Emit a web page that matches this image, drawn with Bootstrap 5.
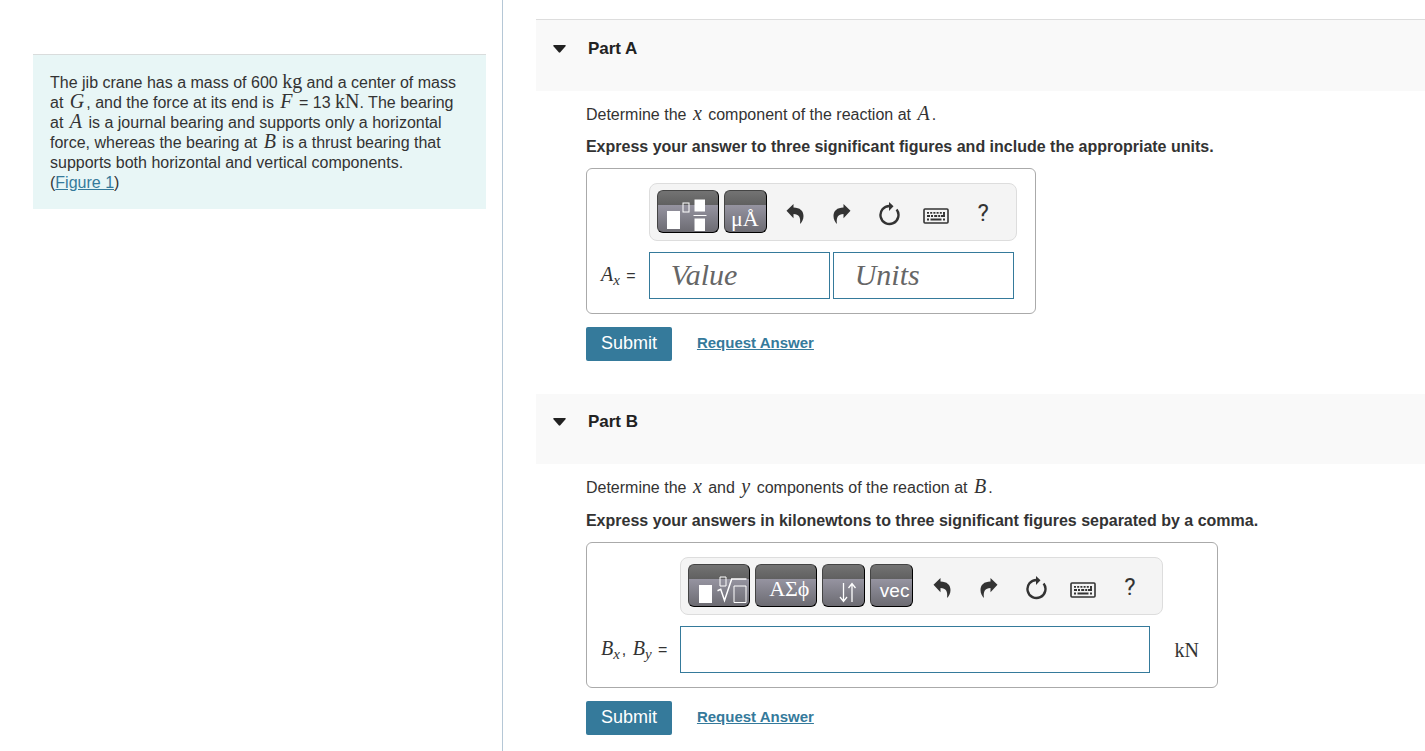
<!DOCTYPE html>
<html lang="en">
<head>
<meta charset="utf-8">
<meta name="viewport" content="width=device-width, initial-scale=1">
<title>Jib crane reactions</title>
<link href="https://cdn.jsdelivr.net/npm/bootstrap@5.3.0/dist/css/bootstrap.min.css" rel="stylesheet">
<style>
  :root { --teal: #357a9b; --ink: #333; }
  body { font-family: "Liberation Sans", Arial, sans-serif; font-size: 16px; line-height: 20px; color: var(--ink); }
  a { color: var(--teal); }
  .page-grid { display: grid; grid-template-columns: 6fr 11fr; }
  .problem-pane { border-right: 1px solid #b5c7d6; padding: 54px 16px 0 33px; }
  .problem-text { background: #e8f6f6; border-top: 1px solid #d9dcdc; padding: 18px 16px 16px 17px; }
  .parts-pane { padding: 19px 0 16px 33px; min-width: 0; }
  .part-head { background: #f9f9f9; height: 70px; padding: 18px 17px; }
  .part-head.first { border-top: 1px solid #ddd; height: 72px; padding-top: 19px; }
  .part-head button { color: #222; font-size: 17px; line-height: 20px; gap: 22px; }
  .part-body { padding: 14px 16px 33px 50px; }
  .ask { margin: 0 0 12px; }
  .ask-bold { margin: 0 0 11px; }
  .part-body.tall .ask { margin-bottom: 13px; }
  .mvar { font-family: "Liberation Serif", "Times New Roman", serif; font-style: italic; font-size: 20px; line-height: 16px; padding: 0 2px; }
  .munit { font-family: "Liberation Serif", "Times New Roman", serif; font-size: 20px; line-height: 16px; }
  .mvar sub { font-size: 15px; line-height: 1; bottom: -4px; }
  .answer-box { display: grid; width: fit-content; grid-template-columns: auto auto; column-gap: 13px; row-gap: 11px; border: 1px solid #aaa; border-radius: 6px; padding: 14px 18px 14px 12px; margin-bottom: 13px; }
  .toolbar { grid-column: 2; justify-self: start; height: 58px; padding: 6px 9px 6px 7px; background: #f4f4f4; border: 1px solid #ddd; border-radius: 8px; }
  .dark-btn { width: 43px; height: 43px; padding: 0; margin-right: 5px; color: #fff; border: 1px solid #444; border-right-color: #000; border-bottom-color: #000; border-radius: 6px; background: linear-gradient(#737373, #606060 34%, #9593a0 35%, #6c6b72); overflow: hidden; }
  .dark-btn.wide { width: 62px; }
  .dark-btn span { display: block; text-align: right; padding: 15px 7px 0 0; }
  .dark-btn .greek { font: 22px/24px "Liberation Serif", serif; }
  .dark-btn .raised { padding-top: 6px; }
  .dark-btn .plain { font-size: 19px; line-height: 24px; padding: 10px 3px 0 0; }
  .tool { width: 47px; height: 44px; padding: 4px 0 0; border: 0; background: none; color: var(--ink); }
  .tool.help { font: 24px/40px Roboto, sans-serif; padding-top: 2px; }
  .entry { height: 47px; border: 1px solid var(--teal); border-radius: 0; width: 181px; padding: 0 21px 2px; font: italic 30px/40px "Liberation Serif", serif; color: #333; }
  .entry::placeholder { color: #666; opacity: 1; }
  .entry.long { width: 470px; }
  .submit { background: var(--teal); color: #fff; border: 0; border-radius: 2px; width: 86px; height: 34px; font-size: 18px; line-height: 20px; padding: 0 0 2px; }
  .request { font-size: 15px; margin-left: 25px; padding-bottom: 2px; }
</style>
</head>
<body>
<svg class="d-none" aria-hidden="true">
  <symbol id="undo" viewBox="0 0 24 24"><path fill="currentColor" d="M3.500 8.800 10.500 2V5.500C17 5.500 20.500 9 20.500 14 20.500 17.500 19 20 17 22 18 15.500 16 12 10.500 12V16.300Z"/></symbol>
  <symbol id="reset" viewBox="0 0 24 24"><path fill="none" stroke="currentColor" stroke-width="2.400" d="M19.600 7.500A9 9 0 1 1 12.500 4"/><path fill="currentColor" d="M12 0 16.500 4.300 12 9Z"/></symbol>
  <symbol id="keyboard" viewBox="0 0 26 16"><rect x="1" y="1" width="24" height="14" rx="1" fill="none" stroke="currentColor" stroke-width="1.600"/><path fill="none" stroke="currentColor" stroke-width="1.800" d="M4 4.800H22" stroke-dasharray="2 1.200"/><path fill="none" stroke="currentColor" stroke-width="1.800" d="M4 8H18" stroke-dasharray="3 1 2 1.200"/><path fill="none" stroke="currentColor" stroke-width="1.800" d="M21 4V9M18 8H22M4 11.500H6M7.500 11.500H18.500M20 11.500H22"/></symbol>
</svg>

<main class="page-grid min-vh-100">
  <aside class="problem-pane">
    <div class="problem-text">
      The jib crane has a mass of 600 <span class="munit">kg</span> and a center of mass at <span class="mvar">G</span>, and the force at its end is <span class="mvar">F</span> = 13 <span class="munit">kN</span>. The bearing at&nbsp;<span class="mvar">A</span> is a journal bearing and supports only a horizontal force, whereas the bearing at <span class="mvar">B</span> is a thrust bearing that supports both horizontal and vertical components.<br>(<a href="#figure">Figure 1</a>)
    </div>
  </aside>

  <div class="parts-pane">
    <section>
      <h2 class="part-head first m-0"><button type="button" class="btn p-0 border-0 fw-bold d-flex align-items-center"><svg width="13" height="8" viewBox="0 0 13 8"><path fill="#222" d="M1 0H12Q13.500 0 12.500 1.200L7.300 7.300Q6.500 8 5.700 7.300L.5 1.200Q-.5 0 1 0Z"/></svg>Part A</button></h2>
      <div class="part-body">
        <p class="ask">Determine the <span class="mvar">x</span> component of the reaction at <span class="mvar">A</span>.</p>
        <p class="ask-bold fw-bold">Express your answer to three significant figures and include the appropriate units.</p>
        <form>
          <div class="answer-box">
            <div class="toolbar d-flex">
              <button type="button" class="dark-btn wide" aria-label="Templates"><svg class="d-block" width="60" height="41" viewBox="1 1 60 41"><path fill="#fff" d="M10 21H23V39H10ZM37.500 9.500H48V21.500H37.500ZM36.500 25H49.500V26H36.500ZM37.500 28.500H48V41H37.500Z"/><rect x="26" y="13" width="6" height="9" fill="none" stroke="#fff"/></svg></button>
              <button type="button" class="dark-btn" aria-label="Symbols"><span class="greek">μÅ</span></button>
              <button type="button" class="tool" aria-label="Undo"><svg width="24" height="24"><use href="#undo"/></svg></button>
              <button type="button" class="tool" aria-label="Redo"><svg width="24" height="24"><use href="#undo" transform="matrix(-1 0 0 1 24 0)"/></svg></button>
              <button type="button" class="tool" aria-label="Reset"><svg width="24" height="24"><use href="#reset"/></svg></button>
              <button type="button" class="tool" aria-label="Keyboard shortcuts"><svg class="mt-1" width="26" height="16"><use href="#keyboard"/></svg></button>
              <button type="button" class="tool help">?</button>
            </div>
            <label for="value-a" class="align-self-center"><span class="mvar">A<sub>x</sub></span> =</label>
            <div class="d-flex" style="gap:3px">
              <input id="value-a" class="entry" type="text" placeholder="Value">
              <input class="entry" type="text" placeholder="Units" aria-label="Units">
            </div>
          </div>
          <div class="d-flex align-items-center">
            <button type="button" class="submit">Submit</button>
            <a href="#answer-a" class="request fw-bold">Request Answer</a>
          </div>
        </form>
      </div>
    </section>

    <section>
      <h2 class="part-head m-0"><button type="button" class="btn p-0 border-0 fw-bold d-flex align-items-center"><svg width="13" height="8" viewBox="0 0 13 8"><path fill="#222" d="M1 0H12Q13.500 0 12.500 1.200L7.300 7.300Q6.500 8 5.700 7.300L.5 1.200Q-.5 0 1 0Z"/></svg>Part B</button></h2>
      <div class="part-body tall">
        <p class="ask">Determine the <span class="mvar">x</span> and <span class="mvar">y</span> components of the reaction at <span class="mvar">B</span>.</p>
        <p class="ask-bold fw-bold">Express your answers in kilonewtons to three significant figures separated by a comma.</p>
        <form>
          <div class="answer-box">
            <div class="toolbar d-flex">
              <button type="button" class="dark-btn wide" aria-label="Templates"><svg class="d-block" width="60" height="41" viewBox="1 1 60 41"><path fill="#fff" d="M11 21H24V39H11Z"/><path fill="none" stroke="#fff" d="M32 13H38V22H32ZM46 22H58V38.500H46Z"/><path fill="none" stroke="#fff" stroke-width="1.500" d="M29.500 26.700 32.700 25.300 36.500 36.500 43.700 15H58.500"/></svg></button>
              <button type="button" class="dark-btn wide" aria-label="Greek letters"><span class="greek raised">ΑΣϕ</span></button>
              <button type="button" class="dark-btn" aria-label="Arrows"><svg class="d-block" width="41" height="41" viewBox="1 1 41 41"><path fill="none" stroke="#fff" stroke-width="1.300" d="M21.500 19V37M18 33 21.500 37.500 25 33M30 38V20M26.500 24 30 19.500 33.500 24"/></svg></button>
              <button type="button" class="dark-btn" aria-label="Vector"><span class="plain">vec</span></button>
              <button type="button" class="tool" aria-label="Undo"><svg width="24" height="24"><use href="#undo"/></svg></button>
              <button type="button" class="tool" aria-label="Redo"><svg width="24" height="24"><use href="#undo" transform="matrix(-1 0 0 1 24 0)"/></svg></button>
              <button type="button" class="tool" aria-label="Reset"><svg width="24" height="24"><use href="#reset"/></svg></button>
              <button type="button" class="tool" aria-label="Keyboard shortcuts"><svg class="mt-1" width="26" height="16"><use href="#keyboard"/></svg></button>
              <button type="button" class="tool help">?</button>
            </div>
            <label for="value-b" class="align-self-center"><span class="mvar">B<sub>x</sub></span>, <span class="mvar">B<sub>y</sub></span> =</label>
            <div class="d-flex align-items-center">
              <input id="value-b" class="entry long" type="text">
              <span class="munit ps-4">kN</span>
            </div>
          </div>
          <div class="d-flex align-items-center">
            <button type="button" class="submit">Submit</button>
            <a href="#answer-b" class="request fw-bold">Request Answer</a>
          </div>
        </form>
      </div>
    </section>
  </div>
</main>
<script src="https://cdn.jsdelivr.net/npm/bootstrap@5.3.0/dist/js/bootstrap.bundle.min.js"></script>
</body>
</html>
